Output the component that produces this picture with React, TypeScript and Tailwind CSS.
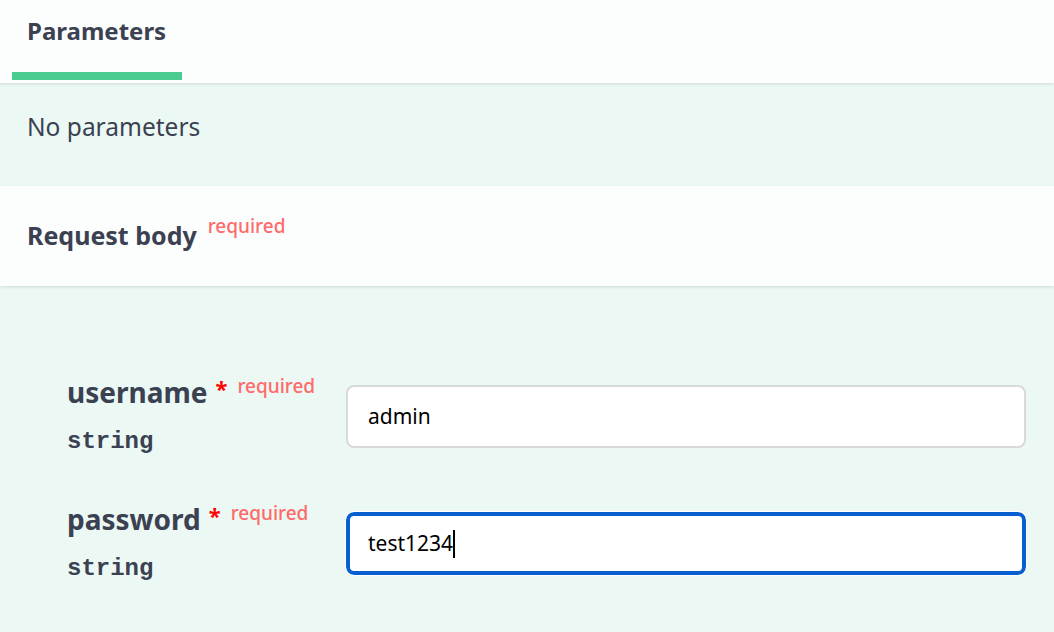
const sans = "font-['Noto_Sans','Open_Sans',sans-serif]";
const mono = "font-['Liberation_Mono','Courier_New',monospace]";

const fields = [
  { name: "username", type: "string", value: "admin", focused: false },
  { name: "password", type: "string", value: "test1234", focused: true },
];

function FieldRow({
  name,
  type,
  value,
  focused,
}: {
  name: string;
  type: string;
  value: string;
  focused: boolean;
}) {
  return (
    <div className="flex">
      <div className="w-[346px] pl-[67px] shrink-0">
        <div className="flex items-start h-[34px]">
          <span className={`${sans} text-[28px] leading-[34px] font-bold text-[#3b4151]`}>
            {name}
          </span>
          <span className={`${sans} ml-[8px] mt-[2px] text-[22px] leading-[22px] font-bold text-[#ff0000]`}>
            *
          </span>
          <span className={`${sans} ml-[10px] text-[19px] leading-[22px] font-medium text-[#ff6a6a]`}>
            required
          </span>
        </div>
        <div className={`${mono} mt-[21px] text-[24px] leading-[24px] font-bold text-[#3b4151]`}>
          {type}
        </div>
      </div>
      <div className="flex-1 pr-[28px] pt-[10px]">
        {focused ? (
          <div className="h-[63px] rounded-[8px] border-[4px] border-[#0860d0] bg-white flex items-center pl-[18px] outline outline-1 outline-white">
            <span className={`${sans} text-[21px] text-black`}>{value}</span>
            <span className="w-[2px] h-[28px] bg-black" />
          </div>
        ) : (
          <div className="h-[63px] rounded-[8px] border-2 border-[#d9d9d9] bg-white flex items-center pl-[20px]">
            <span className={`${sans} text-[21px] text-black`}>{value}</span>
          </div>
        )}
      </div>
    </div>
  );
}

export default function App() {
  return (
    <div className="w-[1054px] h-[632px] overflow-hidden bg-[#ebf8f3]">
      {/* Parameters tab header */}
      <div className="h-[83px] bg-[#fcfdfd] shadow-[0_1px_3px_rgba(0,0,0,0.12)] relative">
        <div className="pl-[12px] pt-[14px]">
          <div className="w-[170px]">
            <div className={`${sans} pl-[15px] text-[24px] leading-[34px] font-bold text-[#3b4151]`}>
              Parameters
            </div>
            <div className="mt-[24px] h-[8px] bg-[#49cc90]" />
          </div>
        </div>
      </div>

      {/* No parameters */}
      <div className="h-[103px] pl-[27px] pt-[27px]">
        <p className={`${sans} text-[24.5px] leading-[34px] text-[#3b4151]`}>No parameters</p>
      </div>

      {/* Request body header */}
      <div className="h-[100px] bg-[#fcfdfd] shadow-[0_1px_3px_rgba(0,0,0,0.12)] relative pl-[27px] pt-[29px] flex items-start">
        <span className={`${sans} text-[25px] leading-[40px] font-bold text-[#3b4151]`}>
          Request body
        </span>
        <span className={`${sans} ml-[11px] text-[19px] leading-[22px] font-medium text-[#ff6a6a]`}>
          required
        </span>
      </div>

      {/* Body fields */}
      <div className="pt-[89px] flex flex-col gap-[48px]">
        {fields.map((f) => (
          <FieldRow key={f.name} {...f} />
        ))}
      </div>
    </div>
  );
}
